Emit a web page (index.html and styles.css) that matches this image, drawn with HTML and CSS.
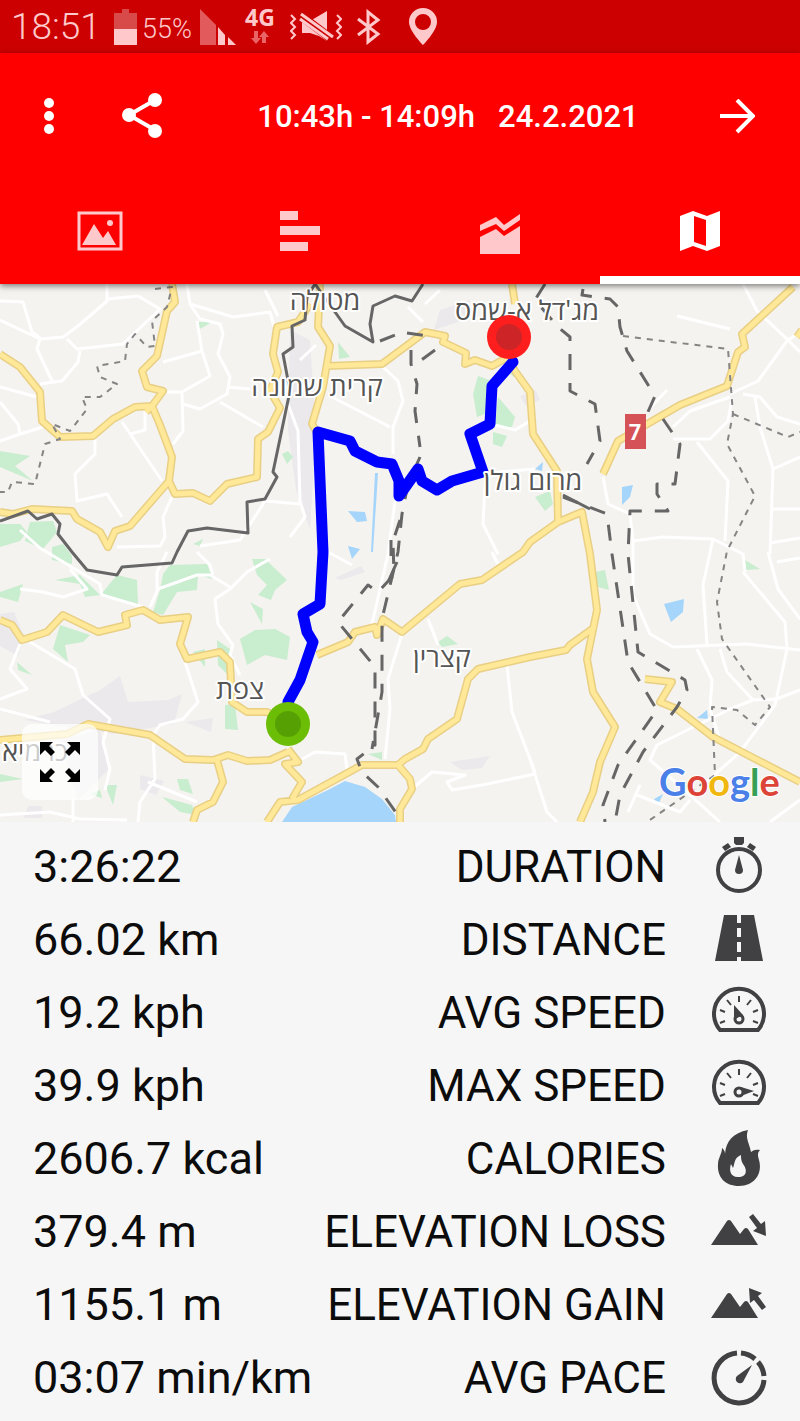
FILE: index.html
```html
<!DOCTYPE html>
<html lang="en">
<head>
<meta charset="utf-8">
<meta name="viewport" content="width=device-width, initial-scale=1">
<title>Ride 24.2.2021</title>
<link rel="stylesheet" href="styles.css">
</head>
<body>

<div class="statusbar">
  <span class="clock">18:51</span>
  <svg class="battery" width="23" height="36" viewBox="0 0 23 36"><path fill="#d84a4a" d="M8 0h7v4h8v16H0V4h8z"/><path fill="#ffc9cb" d="M0 20h23v16H0z"/></svg>
  <span class="percent">55%</span>
  <svg class="signal" width="36" height="36" viewBox="0 0 36 36"><path fill="#e25a5c" d="M0 0l16 16v20H0z"/><path fill="#ffc9cb" d="M18 18l7 8v10h-7zM28 28l8 8h-8z"/></svg>
  <span class="network">4G
    <svg width="18" height="15" viewBox="0 0 18 15"><path fill="#e86466" d="M3 1h4v7h3l-5 6-5-6h3zM11 13V7H8l5-6 5 6h-3v6z"/></svg>
  </span>
  <svg class="mute" width="52" height="34" viewBox="0 0 52 34"><g fill="none" stroke="#ffc9cb" stroke-width="2"><path d="M1 5l4 4-4 4 4 4-4 4 4 4-4 4M47 5l4 4-4 4 4 4-4 4 4 4-4 4"/></g><path fill="#ffc9cb" d="M12 11h8L37 1v30l-8-5-9-3h-8z"/><path stroke="#cc0000" stroke-width="9" d="M10 5l33 25"/><path stroke="#ffc9cb" stroke-width="3" d="M11 4l32 23M10 9l28 20"/></svg>
  <svg class="bluetooth" width="24" height="36" viewBox="0 0 24 36"><path fill="none" stroke="#ffc9cb" stroke-width="3" d="M1 10l20 15-10 8V3l10 8L1 26"/></svg>
  <svg class="pin" width="28" height="37" viewBox="0 0 28 37"><path fill="#ffc9cb" fill-rule="evenodd" d="M14 0a14 14 0 0 0-14 14c0 9 14 23 14 23s14-14 14-23A14 14 0 0 0 14 0zm0 6a8 8 0 1 1 0 16 8 8 0 0 1 0-16z"/></svg>
</div>

<header class="appbar">
  <div class="toolbar">
    <button type="button" aria-label="Menu"><svg width="40" height="40" viewBox="0 0 40 40"><g fill="#fff"><circle cx="20" cy="6" r="5"/><circle cx="20" cy="19" r="5"/><circle cx="20" cy="32" r="5"/></g></svg></button>
    <button type="button" aria-label="Share"><svg width="44" height="48" viewBox="0 0 44 48"><path fill="none" stroke="#fff" stroke-width="4" d="M34 7L8 22l26 15"/><g fill="#fff"><circle cx="34" cy="7" r="7"/><circle cx="8" cy="22" r="7"/><circle cx="34" cy="38" r="7"/></g></svg></button>
    <h1>10:43h - 14:09h &nbsp; 24.2.2021</h1>
    <button type="button" aria-label="Next"><svg width="36" height="36" viewBox="0 0 36 36"><path fill="none" stroke="#fff" stroke-width="4" d="M1 17h32M18 1l16 16-16 16"/></svg></button>
  </div>
  <nav class="tabs">
    <button type="button" aria-label="Photo"><svg width="46" height="40" viewBox="0 0 46 40"><path fill="none" stroke="#ffc9cb" stroke-width="3" d="M2 2h42v36H2z"/><path fill="#ffc9cb" d="M5 34l12-21 9 14 5-7 8 14z"/><circle cx="33" cy="12" r="3" fill="#ffc9cb"/></svg></button>
    <button type="button" aria-label="Splits"><svg width="40" height="40" viewBox="0 0 40 40"><path fill="#ffc9cb" d="M0 0h18v9H0zM0 15h40v9H0zM0 31h28v9H0z"/></svg></button>
    <button type="button" aria-label="Charts"><svg width="40" height="40" viewBox="0 0 40 40"><path fill="#ffc9cb" d="M0 14l16-8 8 8L40 3v6L24 20l-8-7-16 7zM0 26l16-8 8 7 16-10v28H0z"/></svg></button>
    <button type="button" class="active" aria-label="Map"><svg width="40" height="40" viewBox="0 0 40 40"><path fill="#fff" fill-rule="evenodd" d="M0 5l13-5 14 5 13-5v35l-13 5-14-5-13 5zM14 5v26l12 4V9z"/></svg></button>
  </nav>
</header>

<main>
<div class="map">
  <svg class="canvas" viewBox="0 284 800 538" role="img" aria-label="Route map">
    <rect y="284" width="800" height="538" fill="#f5f3ef"/>

    <!-- built-up areas -->
    <g class="town">
      <path d="M290 330l20 10 6 90-6 100-14-40-8-60zM100 690l20-14 8 26 40-2 14-6-8 30-60 10-90-14 30-8zM0 614l14-2 10 24-6 20-18-10zM335 578l26-12 4 6-24 8zM60 740l40-10 8 40-30 30zM140 775l24 6-8 14-16-6zM450 762l40-6-8 12-20 2zM185 722l28-4-2 14zM28 806l14 0v12H24zM440 310l30-10-6 20-30 10zM520 396l16-6 4 10-14 6z"/>
    </g>

    <!-- parks and forest -->
    <g class="park">
      <path d="M0 451L30 456 15 466 33 481 0 467zM197 322h15l-14 8zM0 524h20l7 8-7 9-20 6zM30 522l23-1 4 11-14 17-18-8zM52 547l11-3 9 12 0 8-20-4zM193 544l10-5-3 7z"/>
      <path d="M338 342l12 15-11 2zM473 394l5-18 14 5-7 33-8 3zM498 397l17 20-3 10h-17zM493 432l14 4-5 11-9-3zM282 454l6-3 5 6-6 7zM535 497l15-6 3 13-8 7z"/>
      <path d="M0 592l23-8-5 18-18-5zM103 592l14-17 20 5 1 24-35-7zM55 580l25-5 20 20-15 2-5-13zM163 574l7-9 37-1 6 15-15-4-1 15-20 2-14 23-10-3 7-22z"/>
      <path d="M252 559l13 0 22 21-12 10-4 10-13-5 9-10-10-10zM250 602l13 7-1 15zM240 639l15-9 20-1 15 8-3 23-22-5-18 10zM60 625l30 10-7 7-18 3 3 17-15-13zM17 662l15 13-14-5zM193 652l12-3v18zM217 640l13 9-2 26-10-10zM225 705l10-1 3 26-13-1z"/>
      <path d="M0 774l23 5-23 3zM105 785h12l-4 20zM90 794l10-4 2 8zM177 779h11l5 15-13-4zM162 797l30 8 5 10-17-3zM438 642l9-6 11 8-16 3zM368 754l14-2v8zM595 572l10-2 4 20-11-3zM745 560l15 9-14 1zM508 372l6-3 0 8z"/>
    </g>

    <g class="water">
      <path d="M622 487l11-2-3 12-8 8zM348 511l17 1 2 9-10 1zM348 546l12 3-8 10zM664 604l20-5-1 13-12 10zM697 718l10-8 1 9zM654 799l9-5-5 11zM535 469l8-7-1 9z"/>
      <path d="M282 822L292 807 328 790 345 781 365 787 382 799 395 815 396 822z"/>
      <path d="M375 473h3l-5 79h-2z"/>
    </g>

    <!-- minor roads -->
    <g class="minor">
      <path d="M0 301L23 302 32 332 40 338M0 320L40 339 63 337 78 326 107 301V284M107 299L138 296 160 309 123 344 77 349 67 339M40 339L37 349 52 381M40 384L62 381 78 362 80 351M0 387L37 397M0 402L18 424 20 434 0 441M20 434L43 427M122 422L162 481M145 410L145 430 130 434"/>
      <path d="M95 439V454L75 474 77 501 107 494 122 517M172 497L163 517 165 537 160 546 117 547M187 284L190 304 233 317 270 312 275 330M190 304L200 319 220 324 223 334 218 354 230 377 227 394 200 409 183 404M197 321L202 351 163 362M202 351L210 376 182 392H162M182 392L183 431 173 444M220 402L263 427M227 387L250 389"/>
      <path d="M265 290L278 316M383 367L398 381 403 401 393 427V454M332 397L390 427M288 404L298 431 300 501 305 517 290 537M200 546L240 540 265 501 300 504M395 501L388 554 372 624M485 484L483 524 498 554M535 469L498 472M408 307L423 322M425 304L440 290M300 360L316 345M495 425L515 430 530 421"/>
      <path d="M743 284L757 311 787 339 800 352M677 316L730 329M730 394L758 381 787 341 800 332M673 427L690 411 730 397M732 399L728 421 710 439H673M743 394L760 397 777 417 800 424M755 397L760 427 773 469 770 554M773 469L800 457M773 509H800M697 442L728 481 725 541M603 477L608 504 630 514 633 541 663 537 713 539 743 554 745 572M713 539L703 585 707 645M633 541V595L650 634 673 647 747 644 800 650M650 408L667 390M770 543L800 538"/>
      <path d="M743 572L785 622 787 649 775 705 740 752 703 785M768 552L778 589 800 619M777 562L800 558M697 649L712 680 710 709 720 740M720 649L727 672 753 700 777 699 800 690M753 700L730 709 657 745 650 760 690 795 720 822M530 759L547 812 557 822M637 795L680 812 690 800M628 812L640 785M770 822L800 800"/>
      <path d="M402 634L388 679 390 709 385 759M428 619L438 645M507 665L512 712 535 772M412 789L432 772 465 775 447 782 452 790 482 785 535 774M302 759L315 752 345 754 347 769M492 552L498 564M328 552L352 565"/>
      <path d="M20 530L40 548 100 584 102 595 143 607M20 589L43 592 63 597 87 589 70 569M150 607L158 589 197 575 210 575 230 587M157 590V572L167 552M197 552L210 565 213 575M270 559L247 572 230 589 215 599 218 624 233 645 230 655 240 675M30 642L75 669 83 695 110 719 103 742 110 769 105 790M20 644L10 669 27 689 0 699M0 709L50 722M185 662L198 702 183 719 160 725 153 735 155 779 140 802 138 822M148 782L197 802M0 815L50 812 80 819 127 820M73 798V822"/>
    </g>

    <!-- main roads, drawn twice for the casing -->
    <defs>
      <g id="roads">
        <path d="M0 354L20 367 40 392 42 421 60 437 93 436 113 419 135 407 152 406 163 391 147 387 142 371 157 356 167 311 175 302 172 284"/>
        <path d="M152 406L160 425 172 457 169 481 175 494 193 493 210 501 227 484 257 477 258 439 268 432 280 408 270 391 278 372 273 354 277 327 298 322 310 304"/>
        <path d="M169 481L130 526 115 531 108 547 100 532 77 519 72 511 32 509 13 514 0 512M152 406L146 412"/>
        <path d="M320 284L318 327 330 346 323 387 312 424 318 434M327 366L382 364 425 332 445 336 443 342 466 353 465 364 475 360 492 366 508 357M512 284L515 304M508 357L515 371 530 392 533 434 557 471 558 522"/>
        <path d="M317 655L348 642 355 632 375 627 377 635 383 619 402 632 460 584 482 580 523 552 530 542 558 522 582 512 590 554 597 610 587 659 593 692 615 727 600 762 593 792 580 822"/>
        <path d="M595 627L570 645 566 650 530 657 478 669 468 679 457 719 428 739 423 749 405 759 398 765H362L298 800 280 802 267 822M398 765L410 779 412 789 400 809V822M288 749L298 762 285 764 302 782 292 799"/>
        <path d="M0 620L12 625 22 640 47 632 63 615 98 632 127 625 125 615 143 610 160 620 188 617 180 644 187 659 220 652 230 662 232 702 247 712 267 712 288 724M0 740L67 734 88 724 150 735 185 759 213 760 228 755 247 761 270 760 288 752M217 760L223 782 213 802 197 810 193 822"/>
        <path d="M603 474L618 441 680 405 727 386 738 352 745 347 742 334 793 287M797 337L802 330M645 679L672 682 660 702 677 709 713 737 800 782"/>
      </g>
    </defs>
    <use href="#roads" class="casing"/>
    <use href="#roads" class="road"/>

    <g class="border">
      <path d="M0 521L28 511 37 519 52 514 60 524 58 534 72 552 87 570 117 575 122 567 172 563 177 552 188 531 207 528 248 533 247 502 265 499 277 477 273 472 290 391 283 354 293 347 292 326 305 320 307 297 315 284 345 326 373 342 370 324 373 306 395 296 412 301 423 284"/>
      <g stroke-dasharray="16 13">
        <path d="M380 341L395 335M407 333L435 337M435 350L420 361M411 350V364L417 384 415 411 420 447M420 457L408 484 402 514 398 552 382 619V692L372 749"/>
        <path d="M400 520L393 541 394 575 378 592 368 585 338 622 375 667V745L357 759 362 772 378 787 397 814"/>
        <path d="M583 289L582 295 610 299 618 307 620 327 627 351 655 396 647 414M663 419L680 444 675 484H657V494L668 511H630L628 554 638 652 685 680 687 690 677 707 643 752 620 795 615 822"/>
        <path d="M545 284L535 300 558 327 570 337V391L595 404 600 441 587 464M563 497L607 514 612 554 628 662 657 710 618 765 603 805 605 822"/>
      </g>
      <path d="M563 495L590 509M391 540V556M397 562L388 582"/>
    </g>
    <g class="district">
      <path d="M623 336L728 349 733 414 727 444 755 496 727 551 717 602 722 639 770 707 755 725 737 710 712 707 715 775 647 822M733 414L788 437 800 432"/>
      <path d="M155 289L172 287 167 307 152 321 155 346 147 347 135 334 127 344 125 361 97 366 100 377 117 384 100 397 82 397 87 409 70 431 52 424 60 439 45 444 35 484 12 482 8 492H0"/>
    </g>

    <path class="route" d="M288 702L300 680 313 642 307 632 303 614 320 604 323 552 318 432 350 441 355 451 377 462 392 464 399 481V496L418 469 422 481 437 490 452 481 483 472 470 434 490 424 492 386 513 362"/>

    <rect x="625" y="414" width="21" height="35" fill="#d55257"/>
    <text class="shield" x="635" y="440">7</text>

    <g class="place">
      <text x="325" y="310">מטולה</text>
      <text x="527" y="320">מג'דל א-שמס</text>
      <text x="317" y="396">קרית שמונה</text>
      <text x="533" y="490">מרום גולן</text>
      <text x="442" y="667">קצרין</text>
      <text x="240" y="699">צפת</text>
      <text x="35" y="761">כרמיא</text>
    </g>

    <circle cx="509" cy="337" r="22" fill="#ff1e1e"/>
    <circle cx="509" cy="337" r="13" fill="#cc2427"/>
    <circle cx="288" cy="724" r="22" fill="#6cbd05"/>
    <circle cx="288" cy="724" r="13" fill="#57a003"/>

    <text class="google" x="659" y="796"><tspan fill="#4a80e8">G</tspan><tspan fill="#dc4437">o</tspan><tspan fill="#f0b711">o</tspan><tspan fill="#4a80e8">g</tspan><tspan fill="#35a056">l</tspan><tspan fill="#dc4437">e</tspan></text>
  </svg>
  <button type="button" class="expand" aria-label="Full screen"><svg width="40" height="40" viewBox="0 0 40 40"><path d="M0 0h13l-4 4 6 6-4 4-6-6-5 5zM40 0v13l-5-5-6 6-4-4 6-6-4-4zM0 40V27l5 5 6-6 4 4-6 6 4 4zM40 40H27l4-4-6-6 4-4 6 6 5-5z"/></svg></button>
</div>

<table class="stats">
  <tr>
    <td>3:26:22</td>
    <th scope="row">DURATION</th>
    <td class="icon"><svg width="56" height="56" viewBox="0 0 56 56"><circle cx="28" cy="30" r="21" fill="none" stroke="#414143" stroke-width="4"/><path d="M23-3h10v6l-2 2h-6l-2-2zM11 7l6-4 3 4-6 4zM45 7l-6-4-3 4 6 4zM28 15l4 15a4 4 0 1 1-8 0z"/></svg></td>
  </tr>
  <tr>
    <td>66.02 km</td>
    <th scope="row">DISTANCE</th>
    <td class="icon"><svg width="56" height="56" viewBox="0 0 56 56"><path fill-rule="evenodd" d="M13 2h13v8h4V2h13l9 46H30v-4h-4v4H4zM26 15v9h4v-9zm0 14v10h4V29z"/></svg></td>
  </tr>
  <tr>
    <td>19.2 kph</td>
    <th scope="row">AVG SPEED</th>
    <td class="icon"><svg width="56" height="56" viewBox="0 0 56 56"><g fill="none" stroke="#414143"><path stroke-width="4" d="M9 44a25 25 0 1 1 38 0z"/><path stroke-width="2" d="M28 10v6M16 14l4 5M40 14l-4 5M9 24l5 2M47 24l-5 2M9 37l5-2M47 37l-5-2"/><circle cx="28" cy="33" r="4" stroke-width="3"/></g><path d="M23 19l9 10-4 2-5 3zM8 42h40l-3 4H11z"/></svg></td>
  </tr>
  <tr>
    <td>39.9 kph</td>
    <th scope="row">MAX SPEED</th>
    <td class="icon"><svg width="56" height="56" viewBox="0 0 56 56"><g fill="none" stroke="#414143"><path stroke-width="4" d="M9 44a25 25 0 1 1 38 0z"/><path stroke-width="2" d="M28 10v6M16 14l4 5M40 14l-4 5M9 24l5 2M47 24l-5 2M9 37l5-2M47 37l-5-2"/><circle cx="28" cy="33" r="4" stroke-width="3"/></g><path d="M43 32l-13-4 2 5-2 4zM8 42h40l-3 4H11z"/></svg></td>
  </tr>
  <tr>
    <td>2606.7 kcal</td>
    <th scope="row">CALORIES</th>
    <td class="icon"><svg width="56" height="56" viewBox="0 0 56 56"><path fill-rule="evenodd" d="M37-2c-3 8 1 12 3 22 2-1 3-3 9-2-3 3-2 6-1 10 4 14-5 26-20 26C14 54 6 45 7 32c0-6 4-10 4-16 2 2 3 3 3 6C15 9 22 1 37-2zM30 23c-7 3-6 8-8 13l-2-4c-2 6-1 13 7 13 10 0 9-8 5-13-2-3-2-6-2-9z"/></svg></td>
  </tr>
  <tr>
    <td>379.4 m</td>
    <th scope="row">ELEVATION LOSS</th>
    <td class="icon"><svg width="56" height="56" viewBox="0 0 56 56"><path d="M0 40l16-24q2-2 4 0l9 13 4-5q2-2 4 0l10 16zM38 12l4-3 8 10 4-3 1 15-13-5 4-3z"/></svg></td>
  </tr>
  <tr>
    <td>1155.1 m</td>
    <th scope="row">ELEVATION GAIN</th>
    <td class="icon"><svg width="56" height="56" viewBox="0 0 56 56"><path d="M0 40l16-24q2-2 4 0l9 13 4-5q2-2 4 0l10 16zM55 29l-4 3-8-10-4 3-1-15 13 5-4 3z"/></svg></td>
  </tr>
  <tr>
    <td>03:07 min/km</td>
    <th scope="row">AVG PACE</th>
    <td class="icon"><svg width="56" height="56" viewBox="0 0 56 56"><path fill="none" stroke="#414143" stroke-width="5" d="M26 2a25 25 0 1 0 27 27M30 2a25 25 0 0 1 14 6M47 11a25 25 0 0 1 6 14"/><path d="M41 14l-9 17a4 4 0 1 1-6-6z"/></svg></td>
  </tr>
</table>
</main>

</body>
</html>
```
FILE: styles.css
```css
body {
  margin: 0;
  background: #f6f6f6;
  color: #0c0c0c;
  font-family: Roboto, "Liberation Sans", sans-serif;
}

button {
  display: flex;
  align-items: center;
  justify-content: center;
  margin: 0;
  padding: 0;
  border: 0;
  background: none;
}

svg {
  display: block;
  flex: none;
}

/* phone status bar */
.statusbar {
  display: flex;
  align-items: center;
  height: 53px;
  padding-left: 11px;
  background: #cc0000;
  color: #ffc9cb;
  font-weight: 300;
}

.clock {
  width: 103px;
  font-size: 37px;
}

.percent {
  margin-left: 5px;
  width: 58px;
  font-size: 27px;
  padding-top: 4px;
}

.network {
  display: flex;
  flex-direction: column;
  align-items: center;
  margin: 0 15px 4px 9px;
  font-family: "Open Sans", sans-serif;
  font-size: 23px;
  font-weight: 700;
  line-height: 25px;
}

.bluetooth {
  margin-left: 15px;
}

.pin {
  margin-left: 28px;
}

/* red header */
.appbar {
  position: relative;
  z-index: 1;
  background: #ff0000;
  color: #fff;
  box-shadow: 0 2px 6px rgba(0, 0, 0, .5);
}

.toolbar {
  display: grid;
  grid-template-columns: 98px 90px 1fr 126px;
  height: 128px;
}

.toolbar h1 {
  margin: 0;
  padding-left: 34px;
  font-size: 31px;
  font-weight: 500;
  line-height: 128px;
  text-align: center;
  white-space: nowrap;
}

.tabs {
  display: grid;
  grid-template-columns: repeat(4, 1fr);
}

.tabs button {
  height: 103px;
  padding-top: 4px;
  border-bottom: 8px solid transparent;
}

.tabs .active {
  border-color: #fff;
}

.tabs svg,
.icon svg {
  overflow: visible;
}

/* map */
.map {
  position: relative;
}

.canvas {
  width: 100%;
  height: auto;
}

.town {
  fill: #ebe9ec;
}

.park {
  fill: #c8edcf;
}

.water {
  fill: #a5d5fb;
}

.minor,
.casing,
.road,
.border,
.district,
.route {
  fill: none;
  stroke-linejoin: round;
}

.minor {
  stroke: #fff;
  stroke-width: 3px;
}

.casing {
  stroke: #e8cf84;
  stroke-width: 8px;
}

.road {
  stroke: #ffe897;
  stroke-width: 5px;
}

.border {
  stroke: #666;
  stroke-width: 3px;
}

.district {
  stroke: #858585;
  stroke-width: 2px;
  stroke-dasharray: 6 6;
}

.route {
  stroke: #0000ff;
  stroke-width: 11px;
  stroke-linecap: round;
}

.place {
  fill: #555;
  stroke: #fff;
  stroke-width: 4px;
  stroke-linejoin: round;
  paint-order: stroke;
  font-family: "Open Sans", "Liberation Sans", sans-serif;
  font-size: 27px;
  text-anchor: middle;
}

.shield {
  fill: #fff;
  font-size: 22px;
  font-weight: 700;
  text-anchor: middle;
}

.google {
  stroke: #fff;
  stroke-width: 2px;
  paint-order: stroke;
  font-family: Lato, sans-serif;
  font-size: 38px;
  font-weight: 700;
}

.expand {
  position: absolute;
  left: 22px;
  bottom: 22px;
  width: 76px;
  height: 76px;
  border-radius: 10px;
  background: rgba(255, 255, 255, .7);
}

/* ride figures */
.stats {
  width: 100%;
  margin-top: 9px;
  border-collapse: collapse;
  font-size: 44px;
  line-height: 72px;
}

.stats td,
.stats th {
  height: 73px;
  padding: 0;
  vertical-align: baseline;
  white-space: nowrap;
}

.stats td {
  padding-left: 33px;
  font-size: 45px;
}

.stats th {
  font-weight: 400;
  text-align: right;
}

.stats .icon {
  width: 56px;
  padding: 0 33px 0 45px;
  vertical-align: middle;
}

.icon svg {
  fill: #414143;
}
```
